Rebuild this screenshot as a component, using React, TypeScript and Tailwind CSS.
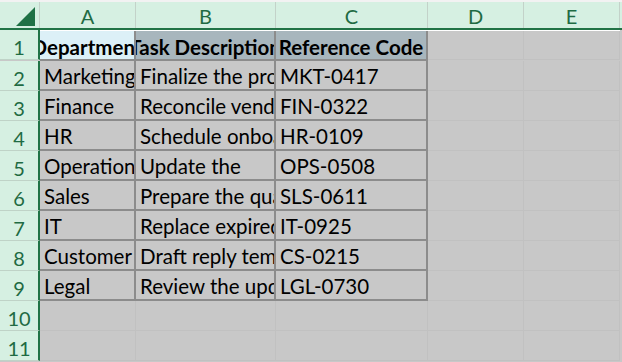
import React from "react";

const cols = [
  { label: "A", w: "w-[96px]" },
  { label: "B", w: "w-[140px]" },
  { label: "C", w: "w-[152px]" },
  { label: "D", w: "w-[96px]" },
  { label: "E", w: "w-[96px]" },
];

const rows = [
  ["Marketing", "Finalize the product launch brief", "MKT-0417"],
  ["Finance", "Reconcile vendor invoices", "FIN-0322"],
  ["HR", "Schedule onboarding sessions", "HR-0109"],
  ["Operations", "Update the", "OPS-0508"],
  ["Sales", "Prepare the quarterly forecast", "SLS-0611"],
  ["IT", "Replace expired certificates", "IT-0925"],
  ["Customer Service", "Draft reply templates", "CS-0215"],
  ["Legal", "Review the updated contract terms", "LGL-0730"],
];

function RowHead({ n }: { n: number }) {
  return (
    <div className="w-[40px] h-[30px] shrink-0 flex items-center justify-center bg-[#d6f0e2] border-r-2 border-r-[#217346] border-b border-b-[#bfd3c7] text-[20px] text-[#1f6b43] leading-none pt-[4px]">
      {n}
    </div>
  );
}

function Cell({ w, children, table, fill }: { w: string; children?: React.ReactNode; table?: boolean; fill?: string }) {
  return (
    <div
      className={`${w} h-[30px] shrink-0 overflow-hidden whitespace-nowrap flex items-end pb-[3px] pl-[4px] text-[20.5px] leading-none text-black ${
        table ? "border-r-2 border-b-2 border-[#8c8c8c]" : "border-r border-b border-[#c1c1c1]"
      } ${fill ?? "bg-[#c8c8c8]"}`}
    >
      {children}
    </div>
  );
}

function HeadCell({ w, children, fill }: { w: string; children: React.ReactNode; fill: string }) {
  return (
    <div
      className={`${w} h-[30px] shrink-0 overflow-hidden whitespace-nowrap flex items-end justify-center pb-[2px] text-[20.5px] leading-none font-bold text-black border-r-2 border-b-2 border-[#8c8c8c] ${fill}`}
    >
      {children}
    </div>
  );
}

export default function App() {
  return (
    <div className="w-[622px] h-[362px] overflow-hidden bg-[#c8c8c8] font-['Lato','Liberation_Sans',sans-serif]">
      <div className="h-[2px] bg-[#f2f2f2]" />
      <div className="flex h-[28px] bg-[#d6f0e2] border-b-2 border-[#217346]">
        <div className="w-[40px] shrink-0 relative border-r border-[#c3d2c9]">
          <svg width="40" height="26" className="absolute left-0 top-0">
            <polygon points="35,5 35,24 16,24" fill="#1f7145" />
          </svg>
        </div>
        {cols.map((c) => (
          <div
            key={c.label}
            className={`${c.w} shrink-0 flex items-center justify-center border-r border-[#c3d2c9] text-[20px] text-[#1f6b43] leading-none pt-[2px]`}
          >
            {c.label}
          </div>
        ))}
        <div className="flex-1" />
      </div>

      <div className="flex">
        <RowHead n={1} />
        <div className="flex border-t border-white">
          <HeadCell w="w-[96px]" fill="bg-[#dcf0f7]">Department</HeadCell>
          <HeadCell w="w-[140px]" fill="bg-[#a8b6bd]">Task Description</HeadCell>
          <HeadCell w="w-[152px]" fill="bg-[#a8b6bd]">Reference Code</HeadCell>
          <div className="w-[96px] h-[29px] shrink-0 border-r border-b border-[#c1c1c1]" />
          <div className="w-[96px] h-[29px] shrink-0 border-r border-b border-[#c1c1c1]" />
        </div>
      </div>

      {rows.map((r, i) => (
        <div key={r[2]} className="flex">
          <RowHead n={i + 2} />
          <Cell w="w-[96px]" table>{r[0]}</Cell>
          <Cell w="w-[140px]" table>{r[1]}</Cell>
          <Cell w="w-[152px]" table>{r[2]}</Cell>
          <Cell w="w-[96px]" />
          <Cell w="w-[96px]" />
        </div>
      ))}

      {[10, 11].map((n) => (
        <div key={n} className="flex">
          <RowHead n={n} />
          <Cell w="w-[96px]" />
          <Cell w="w-[140px]" />
          <Cell w="w-[152px]" />
          <Cell w="w-[96px]" />
          <Cell w="w-[96px]" />
        </div>
      ))}
    </div>
  );
}
